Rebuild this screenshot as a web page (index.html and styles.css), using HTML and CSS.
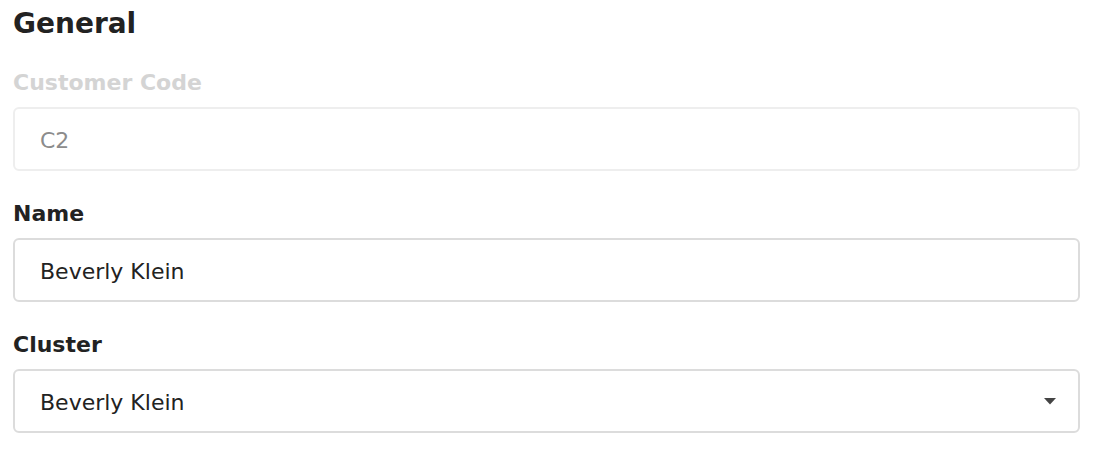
FILE: index.html
```html
<!DOCTYPE html>
<html lang="en">
  <head>
    <meta charset="UTF-8">
    <meta name="viewport" content="width=device-width, initial-scale=1.0">
    <title>Customer</title>
    <link rel="stylesheet" href="styles.css">
  </head>
  <body>
    <form class="form">
      <h2 class="form-title">General</h2>
      <div class="field field-disabled">
        <label class="field-label" for="code">Customer Code</label>
        <input class="field-input" id="code" type="text" value="C2" disabled>
      </div>
      <div class="field">
        <label class="field-label" for="name">Name</label>
        <input class="field-input" id="name" type="text" value="Beverly Klein">
      </div>
      <div class="field">
        <label class="field-label" for="cluster">Cluster</label>
        <div class="select-wrap">
          <select class="field-input field-select" id="cluster">
            <option>Beverly Klein</option>
          </select>
          <svg class="select-arrow" width="12" height="7" viewBox="0 0 12 7"><path d="M0 0 H12 L6 6.5 Z" fill="#444"/></svg>
        </div>
      </div>
    </form>
  </body>
</html>
```

FILE: styles.css
```css
body {
  margin: 0;
  padding: 7px 13px 0;
  background: #fff;
  font-family: "DejaVu Sans", Verdana, sans-serif;
  color: #222;
}
.form { width: 1067px; }
.form-title {
  margin: 0 0 29px;
  font-size: 28px;
  line-height: 34px;
  font-weight: bold;
}
.field { margin-bottom: 30px; }
.field-label {
  display: block;
  margin-bottom: 11px;
  font-size: 22px;
  line-height: 26px;
  font-weight: bold;
  color: #222;
}
.field-input {
  display: block;
  box-sizing: border-box;
  width: 100%;
  height: 64px;
  margin: 0;
  padding: 2px 25px 0;
  border: 2px solid #dcdcdc;
  border-radius: 6px;
  background: #fff;
  font-family: inherit;
  font-size: 22px;
  color: #222;
  outline: none;
  -webkit-appearance: none;
  appearance: none;
}
.field-disabled .field-label { color: #d4d4d4; }
.field-disabled .field-input {
  border-color: #eee;
  color: #8c8c8c;
  -webkit-text-fill-color: #8c8c8c;
}
.select-wrap { position: relative; }
.select-arrow {
  position: absolute;
  right: 24px;
  top: 29px;
  pointer-events: none;
}
```
